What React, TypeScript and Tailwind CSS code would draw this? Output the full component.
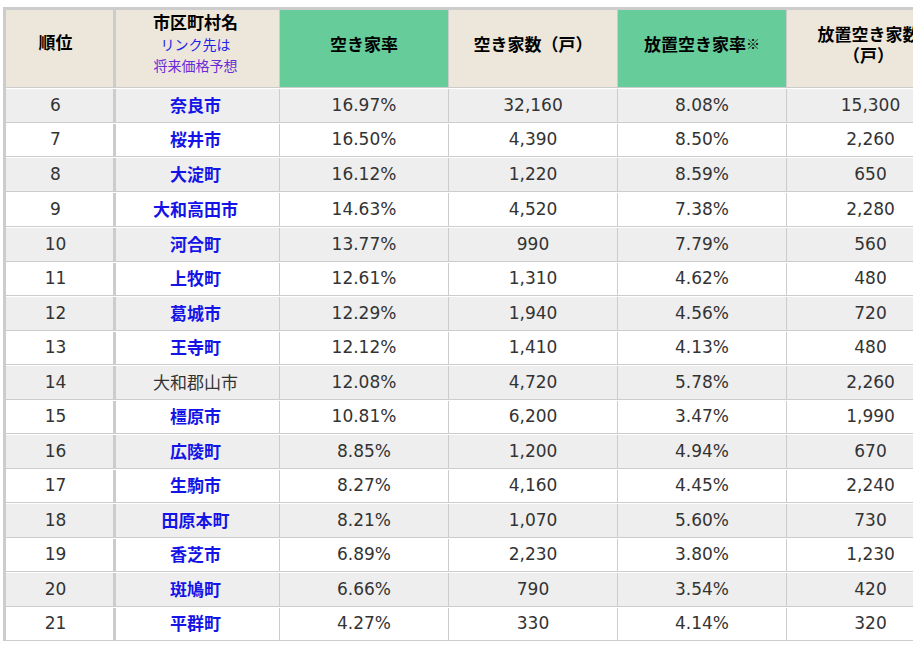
import React from "react";

type Row = [number, string, string, string, string, string, boolean];

const rows: Row[] = [
  [6, "奈良市", "16.97%", "32,160", "8.08%", "15,300", true],
  [7, "桜井市", "16.50%", "4,390", "8.50%", "2,260", true],
  [8, "大淀町", "16.12%", "1,220", "8.59%", "650", true],
  [9, "大和高田市", "14.63%", "4,520", "7.38%", "2,280", true],
  [10, "河合町", "13.77%", "990", "7.79%", "560", true],
  [11, "上牧町", "12.61%", "1,310", "4.62%", "480", true],
  [12, "葛城市", "12.29%", "1,940", "4.56%", "720", true],
  [13, "王寺町", "12.12%", "1,410", "4.13%", "480", true],
  [14, "大和郡山市", "12.08%", "4,720", "5.78%", "2,260", false],
  [15, "橿原市", "10.81%", "6,200", "3.47%", "1,990", true],
  [16, "広陵町", "8.85%", "1,200", "4.94%", "670", true],
  [17, "生駒市", "8.27%", "4,160", "4.45%", "2,240", true],
  [18, "田原本町", "8.21%", "1,070", "5.60%", "730", true],
  [19, "香芝市", "6.89%", "2,230", "3.80%", "1,230", true],
  [20, "斑鳩町", "6.66%", "790", "3.54%", "420", true],
  [21, "平群町", "4.27%", "330", "4.14%", "320", true],
];

const heights = ["h-[35px]", "h-[34px]", "h-[35px]", "h-[35px]", "h-[35px]", "h-[34px]", "h-[35px]", "h-[34px]", "h-[35px]", "h-[34px]", "h-[35px]", "h-[34px]", "h-[35px]", "h-[34px]", "h-[35px]", "h-[34px]"];

const num = "font-['DejaVu_Sans','Noto_Sans_CJK_JP',sans-serif] text-[17px] text-[#333]";

export default function App() {
  return (
    <div className="w-[913px] h-[646px] overflow-hidden bg-white pt-[7px] pl-[3px] font-['Noto_Sans_CJK_JP','Noto_Sans',sans-serif]">
      <div className="w-[948px] border-l-[3px] border-t-[3px] border-[#cccccc]">
        {/* header */}
        <div className="flex h-[78px] border-b border-[#cccccc] text-[17px] font-bold text-black leading-[21px]">
          <div className="w-[110px] shrink-0 bg-[#ede6da] border-r-[3px] border-[#cccccc] flex items-center justify-center pb-[14px] pr-[8px]">
            順位
          </div>
          <div className="w-[164px] shrink-0 bg-[#ede6da] border-r border-[#cccccc] flex flex-col items-center pt-[1px] pr-[4px]">
            <span className="text-[17px] leading-[22px]">市区町村名</span>
            <span className="text-[14px] font-normal text-[#2323e8] leading-[21px] mt-[1px]">リンク先は</span>
            <span className="text-[14px] font-normal text-[#6a2ad8] leading-[21px]">将来価格予想</span>
          </div>
          <div className="w-[169px] shrink-0 bg-[#66cc99] border-r border-[#cccccc] flex items-center justify-center pb-[11px]">
            空き家率
          </div>
          <div className="w-[169px] shrink-0 bg-[#ede6da] border-r border-[#cccccc] flex items-center justify-center pb-[11px]">
            空き家数（戸）
          </div>
          <div className="w-[169px] shrink-0 bg-[#66cc99] border-r border-[#cccccc] flex items-center justify-center pb-[11px]">
            放置空き家率<span className="font-normal text-[14px]">※</span>
          </div>
          <div className="w-[164px] shrink-0 bg-[#ede6da] border-r border-[#cccccc] flex items-center justify-center text-center px-[10px] pb-[10px]">
            放置空き家数（戸）
          </div>
        </div>
        {rows.map((r, i) => (
          <div
            key={r[0]}
            className={`flex ${heights[i]} border-t border-white border-b border-b-[#cccccc] ${i % 2 === 0 ? "bg-[#eeeeee]" : "bg-white"}`}
          >
            <div className={`w-[110px] shrink-0 border-r-[3px] border-[#cccccc] flex items-center justify-center pr-[8px] ${num}`}>{r[0]}</div>
            <div className="w-[164px] shrink-0 border-r border-[#cccccc] flex items-center justify-center text-[17px] leading-none pb-[3px] pr-[4px]">
              {r[6] ? (
                <span className="font-bold text-[#1414e6]">{r[1]}</span>
              ) : (
                <span className="text-[#333]">{r[1]}</span>
              )}
            </div>
            <div className={`w-[169px] shrink-0 border-r border-[#cccccc] flex items-center justify-center ${num}`}>{r[2]}</div>
            <div className={`w-[169px] shrink-0 border-r border-[#cccccc] flex items-center justify-center ${num}`}>{r[3]}</div>
            <div className={`w-[169px] shrink-0 border-r border-[#cccccc] flex items-center justify-center ${num}`}>{r[4]}</div>
            <div className={`w-[164px] shrink-0 border-r border-[#cccccc] flex items-center justify-center pl-[4px] ${num}`}>{r[5]}</div>
          </div>
        ))}
      </div>
    </div>
  );
}
